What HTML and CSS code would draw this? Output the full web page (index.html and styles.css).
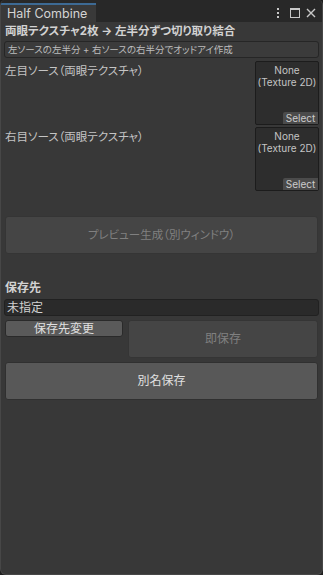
FILE: index.html
```html
<!DOCTYPE html>
<html lang="ja">
<head>
<meta charset="utf-8">
<link rel="stylesheet" href="styles.css">
</head>
<body>
<div class="window">
  <div class="tabbar">
    <div class="tab">Half Combine</div>
    <div class="tools">
      <svg class="ico" width="6" height="12" viewBox="0 0 6 12"><rect x="2" y="1" width="2" height="2" fill="#c8c8c8"/><rect x="2" y="5" width="2" height="2" fill="#c8c8c8"/><rect x="2" y="9" width="2" height="2" fill="#c8c8c8"/></svg>
      <svg class="ico" width="12" height="12" viewBox="0 0 12 12"><rect x="1.5" y="1.5" width="9" height="9" fill="none" stroke="#c8c8c8" stroke-width="1"/><rect x="1" y="1" width="10" height="2" fill="#c8c8c8"/></svg>
      <svg class="ico" width="12" height="12" viewBox="0 0 12 12"><path d="M2 2 L10 10 M10 2 L2 10" stroke="#c8c8c8" stroke-width="1.4" fill="none"/></svg>
    </div>
  </div>
  <div class="content">
    <div class="title">両眼テクスチャ2枚 → 左半分ずつ切り取り結合</div>
    <div class="helpbox">左ソースの左半分 + 右ソースの右半分でオッドアイ作成</div>
    <div class="field-row first">
      <div class="label">左目ソース（両眼テクスチャ）</div>
      <div class="objfield">
        <div class="obj-text">None<br>(Texture 2D)</div>
        <div class="select">Select</div>
      </div>
    </div>
    <div class="field-row second">
      <div class="label">右目ソース（両眼テクスチャ）</div>
      <div class="objfield">
        <div class="obj-text">None<br>(Texture 2D)</div>
        <div class="select">Select</div>
      </div>
    </div>
    <div class="btn big disabled preview">プレビュー生成（別ウィンドウ）</div>
    <div class="section">保存先</div>
    <div class="textfield">未指定</div>
    <div class="btn-row">
      <div class="btn small">保存先変更</div>
      <div class="btn big disabled grow">即保存</div>
    </div>
    <div class="btn big saveas">別名保存</div>
  </div>
</div>
</body>
</html>
```
FILE: styles.css
```css
html, body {
  margin: 0;
  padding: 0;
  background: #1f1f1f;
}
body {
  font-family: "Inter", "Noto Sans CJK JP", sans-serif;
  font-size: 11.5px;
  color: #c4c4c4;
  font-feature-settings: "palt";
}
.window {
  width: 323px;
  height: 575px;
  box-sizing: border-box;
  background: #383838;
  border: 1px solid #474747;
  border-top: none;
  border-radius: 5px 5px 6px 6px;
  overflow: hidden;
  display: flex;
  flex-direction: column;
}
.tabbar {
  height: 22px;
  flex: none;
  background: #282828;
  display: flex;
  align-items: flex-end;
  margin: 0 -1px;
}
.tab {
  width: 95px;
  height: 19px;
  margin-left: 1px;
  background: #393939;
  border-top: 2px solid #3d6a94;
  box-sizing: border-box;
  color: #d4d4d4;
  font-size: 12.5px;
  line-height: 18px;
  padding-left: 6px;
}
.tools {
  margin-left: auto;
  display: flex;
  align-items: center;
  gap: 4px;
  align-self: center;
  margin-right: 6px;
  margin-top: 3px;
}
.ico { display: block; }
.ico:first-child { margin-right: 4px; }
.content {
  padding: 0 3px;
  display: flex;
  flex-direction: column;
}
.title {
  margin-top: 1px;
  padding-left: 1px;
  height: 16px;
  line-height: 16px;
  font-weight: bold;
  color: #d2d2d2;
}
.helpbox {
  margin-top: 2px;
  height: 17px;
  box-sizing: border-box;
  border: 1px solid #262626;
  border-radius: 3px;
  background: #3b3b3b;
  font-size: 9.5px;
  line-height: 15px;
  padding-left: 3px;
  color: #bdbdbd;
}
.field-row {
  display: flex;
  justify-content: space-between;
  height: 64px;
}
.field-row.first { margin-top: 3px; }
.field-row.second { margin-top: 2px; }
.label {
  padding-left: 1px;
  padding-top: 2px;
  line-height: 16px;
}
.objfield {
  width: 64px;
  height: 64px;
  box-sizing: border-box;
  background: #2d2d2d;
  border: 1px solid #1c1c1c;
  border-radius: 2px;
  display: flex;
  flex-direction: column;
  justify-content: space-between;
  align-items: flex-end;
}
.obj-text {
  align-self: stretch;
  text-align: center;
  font-size: 10px;
  line-height: 12px;
  padding-top: 2px;
  color: #c4c4c4;
}
.select {
  width: 35px;
  height: 12px;
  background: #4b4b4b;
  border-top-left-radius: 2px;
  color: #cccccc;
  font-size: 10px;
  line-height: 12px;
  text-align: center;
}
.btn {
  background: #585858;
  border-radius: 3px;
  color: #e0e0e0;
  text-align: center;
  box-sizing: border-box;
  border: 1px solid #303030;
  font-size: 12px;
}
.btn.big {
  height: 38px;
  line-height: 36px;
}
.btn.disabled {
  background: #454545;
  border-color: #353535;
  color: #808080;
}
.preview {
  margin: 25px 1px 0;
  font-size: 11.5px;
}
.section {
  margin-top: 25px;
  height: 18px;
  line-height: 18px;
  font-weight: bold;
  font-size: 12px;
  color: #d2d2d2;
  padding-left: 1px;
}
.textfield {
  margin-top: 2px;
  height: 17px;
  box-sizing: border-box;
  background: #2a2a2a;
  border: 1px solid #212121;
  border-radius: 3px;
  line-height: 15px;
  font-size: 12px;
  padding-left: 2px;
  color: #d2d2d2;
}
.btn-row {
  margin: 4px 1px 0;
  display: flex;
  align-items: flex-start;
  gap: 5px;
}
.btn.small {
  width: 118px;
  height: 17px;
  line-height: 15px;
  background: #5a5a5a;
  border-color: #2a2a2a;
}
.grow { flex: 1; }
.saveas {
  margin: 4px 1px 0;
}
```
